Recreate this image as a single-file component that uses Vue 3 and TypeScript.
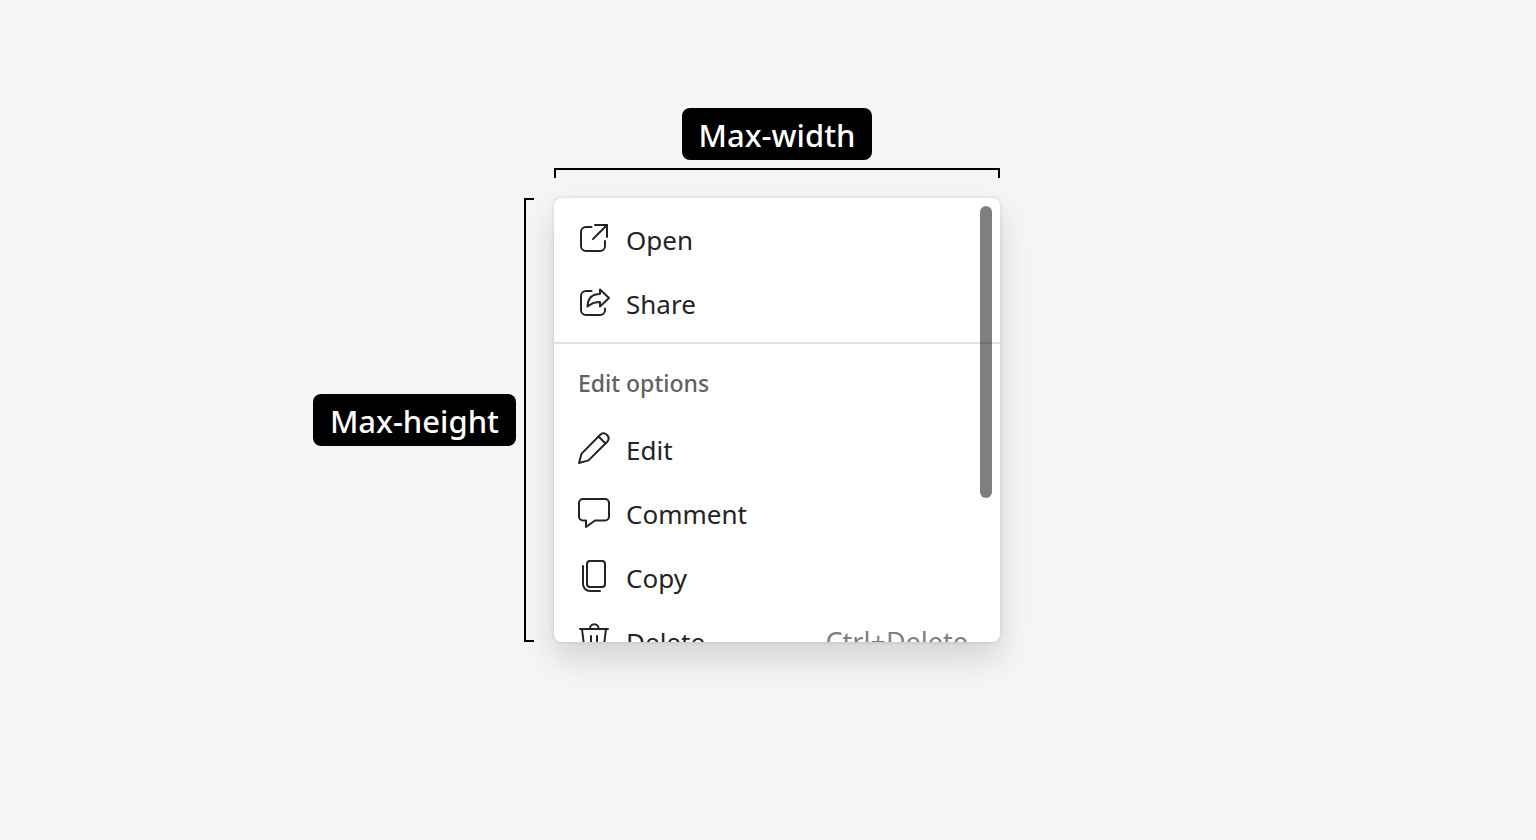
<script setup lang="ts">
interface MenuItem {
  label: string
  paths: string[]
  shortcut?: string
}

const fileItems: MenuItem[] = [
  {
    label: 'Open',
    paths: [
      'M17.500 9H12a5 5 0 0 0-5 5v14a5 5 0 0 0 5 5h14a5 5 0 0 0 5-5v-5',
      'M21 7h12v12',
      'M19 21L33 7',
    ],
  },
  {
    label: 'Share',
    paths: [
      'M17.500 9H12a5 5 0 0 0-5 5v14a5 5 0 0 0 5 5h14a5 5 0 0 0 5-5v-1.500',
      'M26 7.500L35 16L26 24.500V20C20.500 20 17 21.500 13.500 24.500C13.800 16.500 18 12 26 12Z',
    ],
  },
]

const editItems: MenuItem[] = [
  {
    label: 'Edit',
    paths: [
      'M26.500 6.500a5 5 0 0 1 7 7L14.500 32.400L5 35L7.600 25.600Z',
      'M24.500 8.500l7 7',
    ],
  },
  {
    label: 'Comment',
    paths: [
      'M9 7h22a4 4 0 0 1 4 4v13.500a4 4 0 0 1-4 4H21L12 35V28.500H9a4 4 0 0 1-4-4V11a4 4 0 0 1 4-4Z',
    ],
  },
  {
    label: 'Copy',
    paths: [
      'M16 5h12a3 3 0 0 1 3 3v20a3 3 0 0 1-3 3H16a3 3 0 0 1-3-3V8a3 3 0 0 1 3-3Z',
      'M9 10v18a7 7 0 0 0 7 7h10',
    ],
  },
  {
    label: 'Delete',
    shortcut: 'Ctrl+Delete',
    paths: [
      'M6 9h28',
      'M16 9V8.500a4.300 4.300 0 0 1 8.600 0V9',
      'M8 9l2.600 21a4 4 0 0 0 4 3.500h10.800a4 4 0 0 0 4-3.500L32 9',
      'M17 16v11M23 16v11',
    ],
  },
]

const groups = [
  { title: '', items: fileItems },
  { title: 'Edit options', items: editItems },
]
</script>

<template>
  <main class="stage">
    <div class="measure measure-width">
      <span class="tag">Max-width</span>
      <span class="bracket bracket-width"></span>
    </div>
    <div class="measure measure-height">
      <span class="tag">Max-height</span>
      <span class="bracket bracket-height"></span>
    </div>
    <div class="popup">
      <div class="list" role="menu">
        <section v-for="group in groups" :key="group.title" class="group">
          <h2 v-if="group.title" class="heading">{{ group.title }}</h2>
          <button
            v-for="item in group.items"
            :key="item.label"
            class="item"
            type="button"
            role="menuitem"
          >
            <svg class="icon" viewBox="0 0 40 40" aria-hidden="true">
              <path v-for="d in item.paths" :key="d" :d="d" />
            </svg>
            <span class="label">{{ item.label }}</span>
            <span v-if="item.shortcut" class="shortcut">{{ item.shortcut }}</span>
          </button>
        </section>
      </div>
      <span class="thumb"></span>
    </div>
  </main>
</template>

<style>
body {
  background: #f5f5f5;
}
</style>

<style scoped>
.stage {
  box-sizing: border-box;
  min-height: 100vh;
  padding: 108px 0 40px 18px;
  display: grid;
  grid-template-columns: minmax(0, 1fr) minmax(0, 446px) minmax(0, 1fr);
  align-content: start;
  row-gap: 20px;
  background: #f5f5f5;
  color: #242424;
  font-family: "Segoe UI", "Noto Sans", "Open Sans", sans-serif;
}

.measure {
  display: flex;
  align-items: center;
  gap: 8px;
}

.measure-width {
  grid-column: 2;
  flex-direction: column;
}

.measure-height {
  grid-column: 1;
  justify-content: flex-end;
  padding-right: 20px;
}

.tag {
  padding: 5px 17px 3px;
  border-radius: 8px;
  background: #000;
  color: #fff;
  font-size: 31px;
  font-weight: 500;
  line-height: 44px;
  white-space: nowrap;
}

.bracket {
  box-sizing: border-box;
  border: 2px solid #000;
}

.bracket-width {
  align-self: stretch;
  height: 10px;
  border-bottom: 0;
}

.bracket-height {
  align-self: stretch;
  width: 10px;
  border-right: 0;
}

.popup {
  grid-column: 2;
  position: relative;
  border-radius: 8px;
  background: #fff;
  box-shadow: 0 0 4px rgba(0, 0, 0, 0.12), 0 16px 32px rgba(0, 0, 0, 0.14);
}

.list {
  box-sizing: border-box;
  max-height: 444px;
  padding: 8px 0;
  overflow: hidden;
  border-radius: 8px;
}

.group + .group {
  margin-top: 8px;
  padding-top: 8px;
  border-top: 2px solid #e0e0e0;
}

.heading {
  margin: 0;
  padding: 0 24px 2px;
  color: #616161;
  font-size: 23px;
  font-weight: 500;
  line-height: 62px;
}

.item {
  box-sizing: border-box;
  width: 100%;
  height: 64px;
  padding: 0 32px 0 20px;
  display: flex;
  align-items: center;
  gap: 12px;
  border: 0;
  background: none;
  color: inherit;
  font: inherit;
  line-height: 40px;
  text-align: left;
}

.icon {
  width: 40px;
  height: 40px;
  flex: none;
  fill: none;
  stroke: currentColor;
  stroke-width: 2;
  stroke-linejoin: round;
  stroke-linecap: round;
}

.label {
  flex: 1;
  padding-top: 4px;
  font-size: 26px;
}

.shortcut {
  padding-top: 4px;
  color: #808080;
  font-size: 27px;
}

.thumb {
  position: absolute;
  top: 8px;
  right: 8px;
  width: 12px;
  height: 292px;
  border-radius: 6px;
  background: rgba(0, 0, 0, 0.5);
}
</style>
